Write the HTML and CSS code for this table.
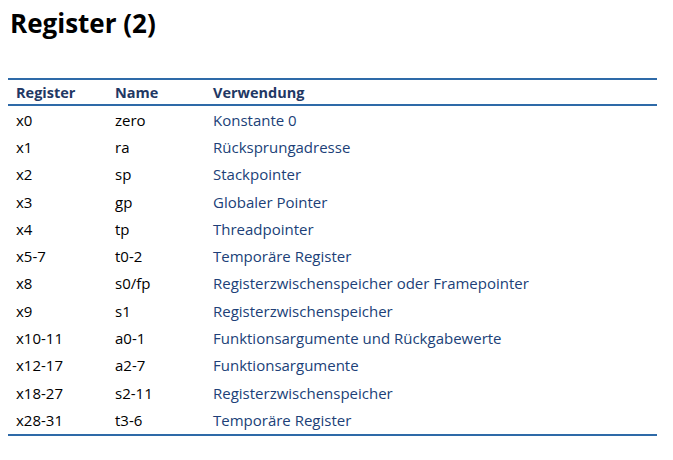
FILE: index.html
```html
<!DOCTYPE html>
<html lang="de">
<head>
<meta charset="utf-8">
<title>Register (2)</title>
<link rel="stylesheet" href="styles.css">
</head>
<body>
<h1 class="title">Register (2)</h1>
<table class="regs">
<thead>
<tr><th class="c1">Register</th><th class="c2">Name</th><th class="c3">Verwendung</th></tr>
</thead>
<tbody>
<tr><td>x0</td><td>zero</td><td class="use">Konstante 0</td></tr>
<tr><td>x1</td><td>ra</td><td class="use">Rücksprungadresse</td></tr>
<tr><td>x2</td><td>sp</td><td class="use">Stackpointer</td></tr>
<tr><td>x3</td><td>gp</td><td class="use">Globaler Pointer</td></tr>
<tr><td>x4</td><td>tp</td><td class="use">Threadpointer</td></tr>
<tr><td>x5-7</td><td>t0-2</td><td class="use">Temporäre Register</td></tr>
<tr><td>x8</td><td>s0/fp</td><td class="use">Registerzwischenspeicher oder Framepointer</td></tr>
<tr><td>x9</td><td>s1</td><td class="use">Registerzwischenspeicher</td></tr>
<tr><td>x10-11</td><td>a0-1</td><td class="use">Funktionsargumente und Rückgabewerte</td></tr>
<tr><td>x12-17</td><td>a2-7</td><td class="use">Funktionsargumente</td></tr>
<tr><td>x18-27</td><td>s2-11</td><td class="use">Registerzwischenspeicher</td></tr>
<tr><td>x28-31</td><td>t3-6</td><td class="use">Temporäre Register</td></tr>
</tbody>
</table>
</body>
</html>
```
FILE: styles.css
```css
html, body {
  margin: 0;
  padding: 0;
  background: #ffffff;
}
body {
  font-family: "Open Sans", "Liberation Sans", sans-serif;
  color: #000;
}
.title {
  margin: 0;
  padding: 4px 0 0 10px;
  font-size: 26px;
  font-weight: 700;
  line-height: 38px;
  color: #000;
}
.regs {
  margin: 36px 0 0 8px;
  width: 649px;
  border-collapse: collapse;
  font-size: 15px;
}
.regs thead tr {
  border-top: 2px solid #2e6aa8;
  border-bottom: 2px solid #2e6aa8;
}
.regs tbody tr:last-child {
  border-bottom: 2px solid #2e6aa8;
}
.regs th {
  text-align: left;
  font-weight: 700;
  font-size: 14.5px;
  color: #1f3864;
  height: 24px;
  padding: 0 0 0 8px;
}
.regs td {
  height: 27.3px;
  padding: 0 0 0 8px;
  vertical-align: middle;
}
.regs .c1 { width: 91px; }
.regs .c2 { width: 90px; }
.regs .use { color: #203f78; }
```
